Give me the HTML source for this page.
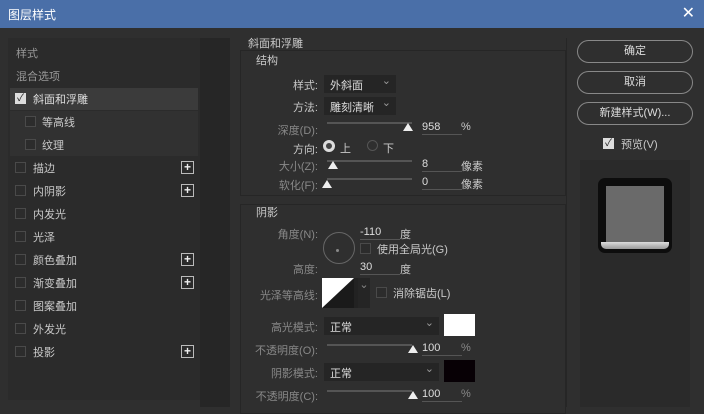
<!DOCTYPE html>
<html><head><meta charset="utf-8"><style>
*{margin:0;padding:0;box-sizing:border-box}
body{width:704px;height:407px;overflow:hidden;background:#2f2f2f;font-family:"Liberation Sans","Noto Sans CJK SC",sans-serif;font-size:11px;color:#c9c9c9;position:relative}
.a{position:absolute;white-space:nowrap}
.title{left:0;top:0;width:704px;height:28px;background:#4a6fa8;color:#fff;font-size:12px;padding:6px 8px}
.cb{position:absolute;width:11px;height:11px;border:1px solid #4a4a4a;background:#2c2c2c}
.plus{position:absolute;width:13px;height:13px;border:1px solid #bbb;color:#eee;font-size:12px;line-height:10px;text-align:center;font-weight:bold}
.btn{position:absolute;left:577px;width:116px;height:23px;border:1px solid #888;border-radius:12px;text-align:center;line-height:21px;color:#ddd}
.sel{position:absolute;background:#252525;height:18px;padding:2px 6px;color:#ddd}
.sel:after{content:"⌄";position:absolute;right:5px;top:-1px;color:#999}
.track{position:absolute;height:2px;background:#555}
.thumb{position:absolute;width:0;height:0;border-left:5px solid transparent;border-right:5px solid transparent;border-bottom:8px solid #eee}
.inp{position:absolute;border-bottom:1px solid #555;width:40px;height:14px;color:#ddd}
.r{text-align:right}
</style></head><body>
<div class="a title">图层样式<span style="position:absolute;right:9px;top:3px;font-size:16px">✕</span></div>
<div class="a" style="left:8px;top:38px;width:192px;height:362px;background:#2b2b2b"></div>
<div class="a" style="left:200px;top:38px;width:30px;height:369px;background:#262626"></div>
<div class="a" style="left:10px;top:88px;width:188px;height:22px;background:#3b3b3b"></div>
<div class="a" style="left:10px;top:111px;width:188px;height:45px;background:#313131"></div>
<div class="a" style="left:16px;top:45px;color:#999">样式</div>
<div class="a" style="left:16px;top:68px;color:#999">混合选项</div>
<div class="cb" style="left:15px;top:93px;background:#ddd;border-color:#ddd;color:#222;font-size:10px;line-height:9px;text-align:center">✓</div>
<div class="a" style="left:33px;top:91px;color:#ddd">斜面和浮雕</div>
<div class="cb" style="left:25px;top:116px"></div><div class="a" style="left:42px;top:114px">等高线</div>
<div class="cb" style="left:25px;top:139px"></div><div class="a" style="left:42px;top:137px">纹理</div>
<div class="cb" style="left:15px;top:162px"></div><div class="a" style="left:33px;top:160px">描边</div><div class="plus" style="left:181px;top:161px">+</div>
<div class="cb" style="left:15px;top:185px"></div><div class="a" style="left:33px;top:183px">内阴影</div><div class="plus" style="left:181px;top:184px">+</div>
<div class="cb" style="left:15px;top:208px"></div><div class="a" style="left:33px;top:206px">内发光</div>
<div class="cb" style="left:15px;top:231px"></div><div class="a" style="left:33px;top:229px">光泽</div>
<div class="cb" style="left:15px;top:254px"></div><div class="a" style="left:33px;top:252px">颜色叠加</div><div class="plus" style="left:181px;top:253px">+</div>
<div class="cb" style="left:15px;top:277px"></div><div class="a" style="left:33px;top:275px">渐变叠加</div><div class="plus" style="left:181px;top:276px">+</div>
<div class="cb" style="left:15px;top:300px"></div><div class="a" style="left:33px;top:298px">图案叠加</div>
<div class="cb" style="left:15px;top:323px"></div><div class="a" style="left:33px;top:321px">外发光</div>
<div class="cb" style="left:15px;top:346px"></div><div class="a" style="left:33px;top:344px">投影</div><div class="plus" style="left:181px;top:345px">+</div>

<div class="a" style="left:240px;top:50px;width:326px;height:146px;border:1px solid #262626"></div>
<div class="a" style="left:240px;top:204px;width:326px;height:210px;border:1px solid #262626"></div>
<div class="a" style="left:248px;top:35px">斜面和浮雕</div>
<div class="a" style="left:256px;top:52px">结构</div>
<div class="a r" style="left:250px;top:77px;width:68px">样式:</div><div class="sel" style="left:324px;top:75px;width:72px">外斜面</div>
<div class="a r" style="left:250px;top:99px;width:68px">方法:</div><div class="sel" style="left:324px;top:97px;width:72px">雕刻清晰</div>
<div class="a r" style="left:250px;top:122px;width:68px;color:#888">深度(D):</div><div class="track" style="left:327px;top:122px;width:85px"></div><div class="thumb" style="left:403px;top:123px"></div><div class="inp" style="left:422px;top:121px">958</div><div class="a" style="left:461px;top:121px">%</div>
<div class="a r" style="left:250px;top:141px;width:68px">方向:</div>
<div class="a" style="left:323px;top:140px;width:12px;height:12px;border-radius:50%;border:3px solid #ddd;background:#444"></div><div class="a" style="left:340px;top:140px">上</div>
<div class="a" style="left:367px;top:140px;width:11px;height:11px;border-radius:50%;border:1px solid #555"></div><div class="a" style="left:383px;top:140px">下</div>
<div class="a r" style="left:250px;top:158px;width:68px;color:#888">大小(Z):</div><div class="track" style="left:327px;top:160px;width:85px"></div><div class="thumb" style="left:328px;top:161px"></div><div class="inp" style="left:422px;top:158px">8</div><div class="a" style="left:461px;top:158px">像素</div>
<div class="a r" style="left:250px;top:177px;width:68px;color:#888">软化(F):</div><div class="track" style="left:327px;top:178px;width:85px"></div><div class="thumb" style="left:322px;top:180px"></div><div class="inp" style="left:422px;top:176px">0</div><div class="a" style="left:461px;top:176px">像素</div>

<div class="a" style="left:256px;top:204px">阴影</div>
<div class="a r" style="left:250px;top:226px;width:68px;color:#888">角度(N):</div>
<div class="a" style="left:323px;top:232px;width:32px;height:32px;border-radius:50%;border:1px solid #666"></div>
<div class="a" style="left:336px;top:249px;width:3px;height:3px;border-radius:50%;background:#888"></div>
<div class="inp" style="left:360px;top:226px">-110</div><div class="a" style="left:400px;top:226px">度</div>
<div class="cb" style="left:360px;top:243px"></div><div class="a" style="left:377px;top:241px">使用全局光(G)</div>
<div class="a r" style="left:250px;top:261px;width:68px;color:#888">高度:</div><div class="inp" style="left:360px;top:261px">30</div><div class="a" style="left:400px;top:261px">度</div>
<div class="a r" style="left:240px;top:287px;width:78px;color:#888">光泽等高线:</div>
<svg class="a" style="left:322px;top:278px" width="36" height="30"><rect width="32" height="30" fill="#1a1a1a"/><polygon points="0,0 32,0 0,30" fill="#fff"/><rect x="32" width="4" height="30" fill="#222"/></svg>
<div class="a" style="left:358px;top:278px;width:12px;height:30px;background:#252525;color:#888;text-align:center">⌄</div>
<div class="cb" style="left:376px;top:287px"></div><div class="a" style="left:393px;top:285px">消除锯齿(L)</div>
<div class="a r" style="left:250px;top:319px;width:68px;color:#888">高光模式:</div><div class="sel" style="left:324px;top:317px;width:115px">正常</div>
<div class="a" style="left:444px;top:314px;width:31px;height:22px;background:#fff"></div>
<div class="a r" style="left:240px;top:342px;width:78px;color:#888">不透明度(O):</div><div class="track" style="left:327px;top:344px;width:85px"></div><div class="thumb" style="left:408px;top:345px"></div><div class="inp" style="left:422px;top:342px">100</div><div class="a" style="left:461px;top:342px;color:#888">%</div>
<div class="a r" style="left:250px;top:365px;width:68px;color:#888">阴影模式:</div><div class="sel" style="left:324px;top:363px;width:115px">正常</div>
<div class="a" style="left:444px;top:360px;width:31px;height:22px;background:#070005"></div>
<div class="a r" style="left:240px;top:388px;width:78px;color:#888">不透明度(C):</div><div class="track" style="left:327px;top:390px;width:85px"></div><div class="thumb" style="left:408px;top:391px"></div><div class="inp" style="left:422px;top:388px">100</div><div class="a" style="left:461px;top:388px;color:#888">%</div>

<div class="a" style="left:566px;top:38px;width:1px;height:369px;background:#262626"></div>
<div class="btn" style="top:40px">确定</div>
<div class="btn" style="top:71px">取消</div>
<div class="btn" style="top:102px">新建样式(W)...</div>
<div class="cb" style="left:603px;top:138px;background:#ddd;border-color:#ddd;color:#222;font-size:10px;line-height:9px;text-align:center">✓</div>
<div class="a" style="left:621px;top:136px">预览(V)</div>
<div class="a" style="left:580px;top:160px;width:110px;height:247px;background:#2a2a2a"></div>
<div class="a" style="left:598px;top:178px;width:74px;height:75px;background:#0d0d0d;border-radius:7px"></div>
<div class="a" style="left:606px;top:186px;width:58px;height:59px;background:#6a6a6a"></div>
<div class="a" style="left:601px;top:242px;width:68px;height:7px;background:linear-gradient(#ddd,#999);border-radius:0 0 5px 5px"></div>
</body></html>
